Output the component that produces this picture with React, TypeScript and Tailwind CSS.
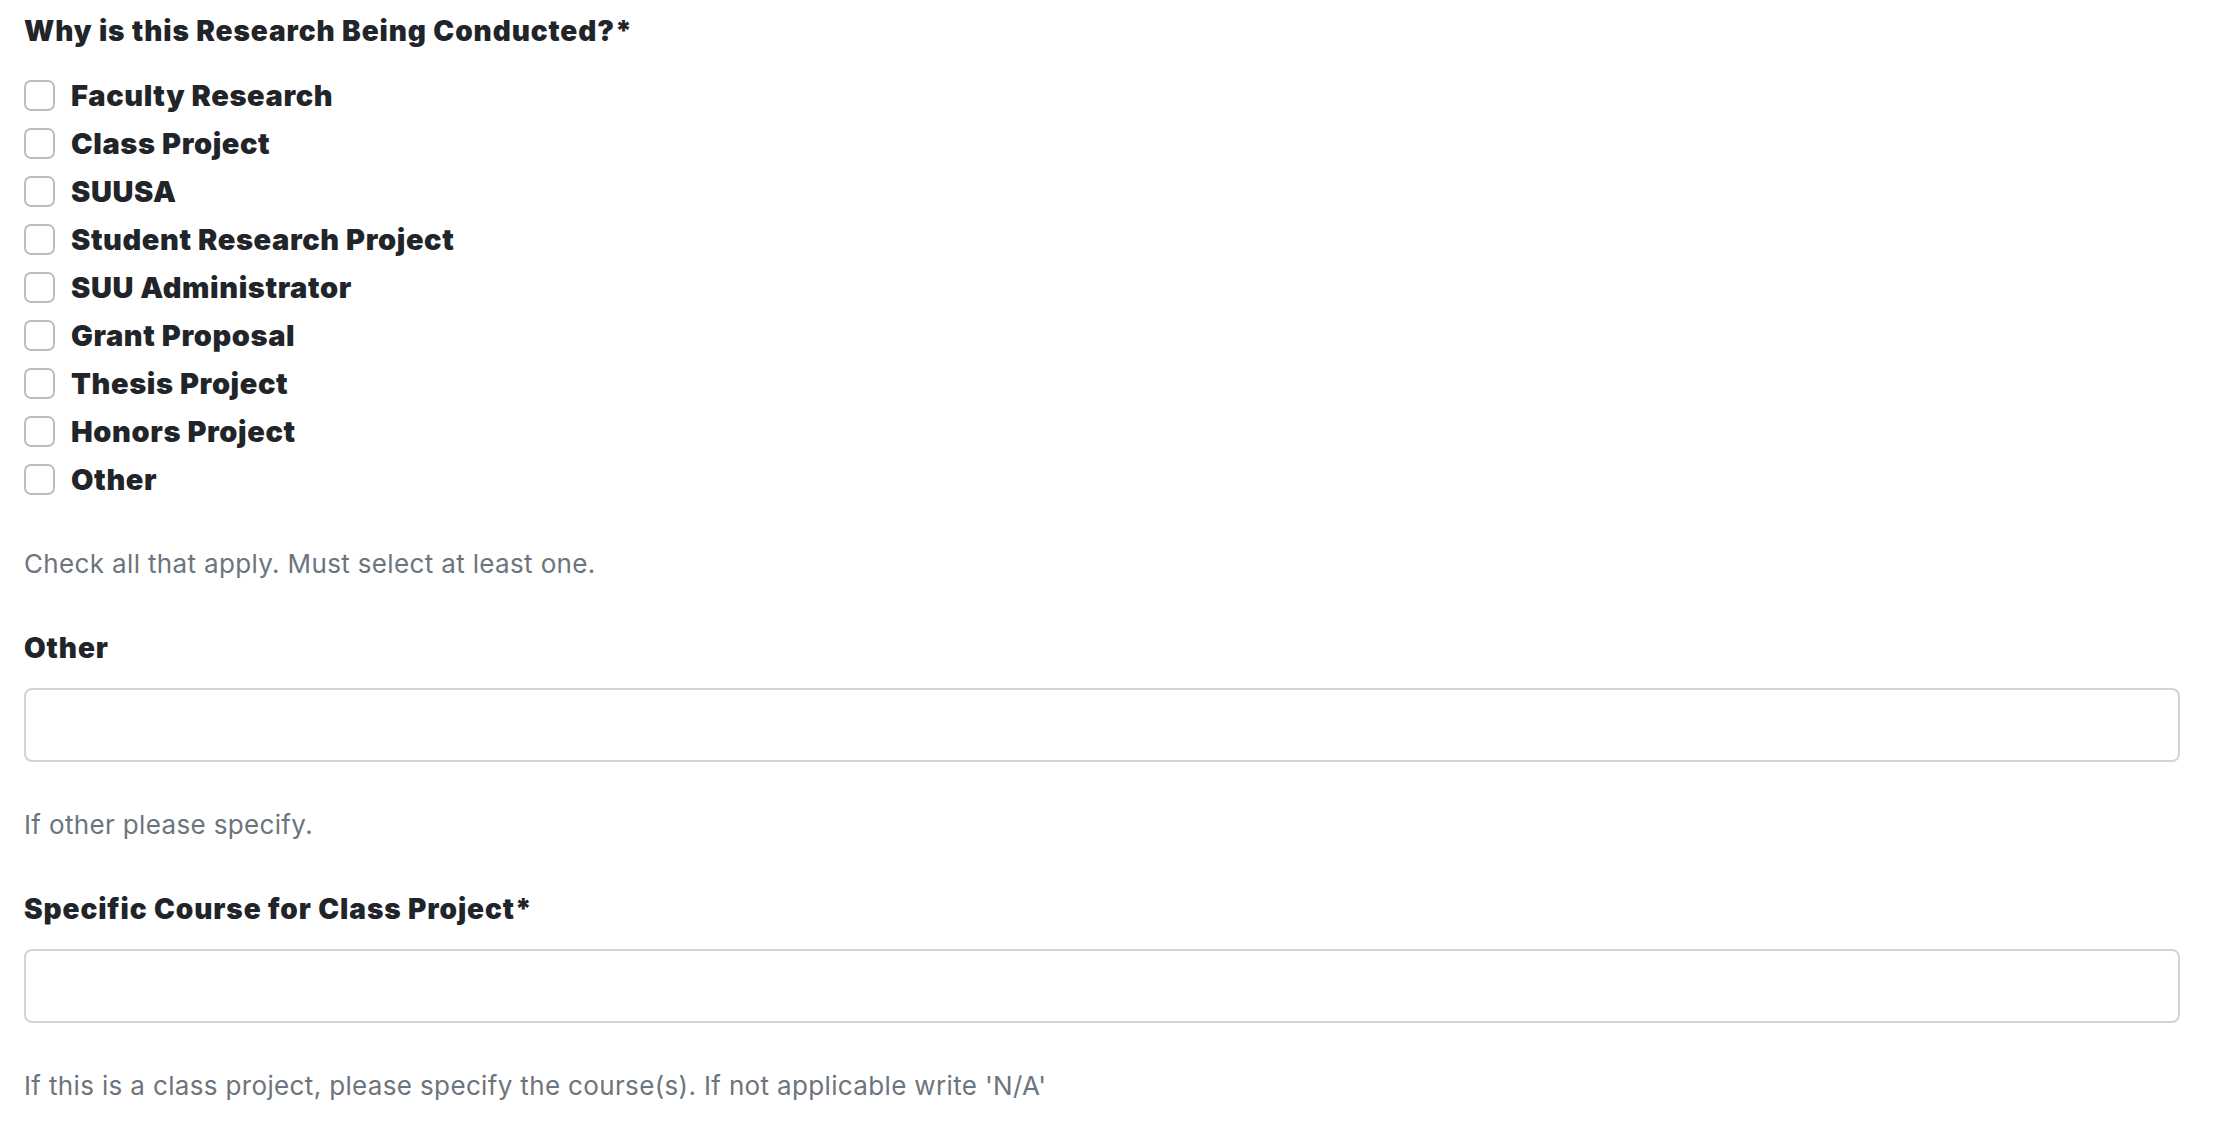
import React from "react";

const options = [
  "Faculty Research",
  "Class Project",
  "SUUSA",
  "Student Research Project",
  "SUU Administrator",
  "Grant Proposal",
  "Thesis Project",
  "Honors Project",
  "Other",
];

function CheckRow({ label }: { label: string }) {
  return (
    <label className="flex h-[48px] items-center gap-[16px]">
      <span className="block h-[31px] w-[31px] rounded-[7px] border-2 border-[#b8bec4] bg-white" />
      <span className="text-[29px] font-black leading-[39px] tracking-[0.6px] text-[#212529]">{label}</span>
    </label>
  );
}

function TextField({ label, help }: { label: string; help: string }) {
  return (
    <div>
      <div className="mt-[46px] text-[28px] font-black leading-[39px] tracking-[0.9px] text-[#212529]">
        {label}
      </div>
      <input
        type="text"
        className="mt-[20px] block h-[74px] w-[2156px] rounded-[8px] border-2 border-[#ced4da] bg-white px-4 outline-none"
      />
      <p className="mt-[43px] text-[26px] leading-[39px] tracking-[0.35px] text-[#6c757d]">{help}</p>
    </div>
  );
}

export default function App() {
  return (
    <div
      className="min-h-screen bg-white pl-[24px] pt-[12px]"
      style={{ fontFamily: "Inter, Roboto, 'Liberation Sans', sans-serif" }}
    >
      <div className="text-[28px] font-black leading-[39px] tracking-[0.9px] text-[#212529]">
        Why is this Research Being Conducted?*
      </div>
      <div className="mt-[20px]">
        {options.map((o) => (
          <CheckRow key={o} label={o} />
        ))}
      </div>
      <p className="mt-[41px] text-[26px] leading-[39px] tracking-[0.35px] text-[#6c757d]">
        Check all that apply. Must select at least one.
      </p>
      <TextField label="Other" help="If other please specify." />
      <TextField
        label="Specific Course for Class Project*"
        help="If this is a class project, please specify the course(s). If not applicable write 'N/A'"
      />
    </div>
  );
}
